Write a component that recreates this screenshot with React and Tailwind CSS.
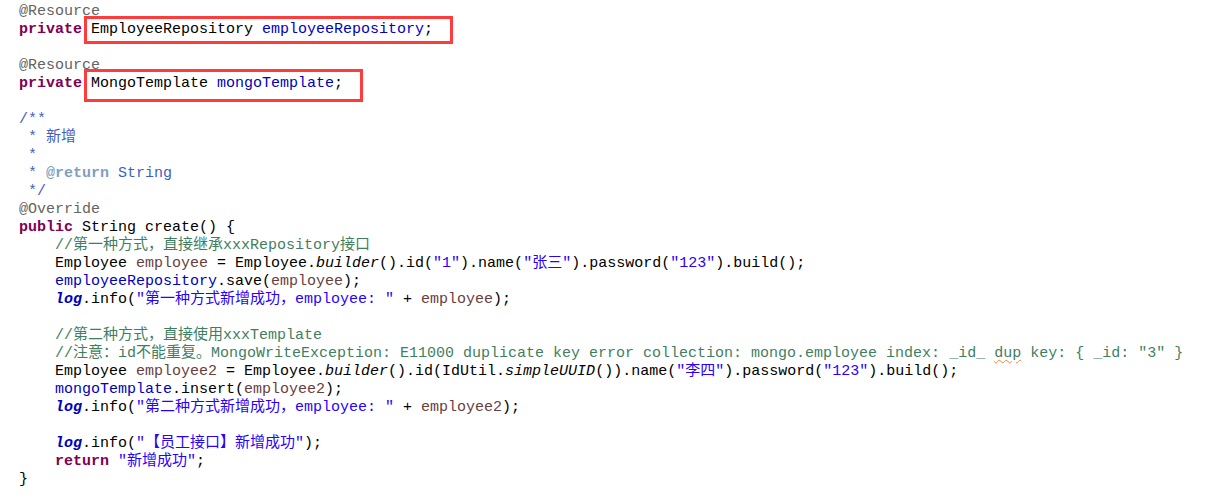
import React from "react";

const A = ({ children }) => <span className="text-[#646464]">{children}</span>;
const K = ({ children }) => <span className="font-bold text-[#7f0055]">{children}</span>;
const F = ({ children }) => <span className="text-[#0000c0]">{children}</span>;
const L = ({ children }) => <span className="text-[#6a3e3e]">{children}</span>;
const S = ({ children }) => <span className="text-[#2a00ff]">{children}</span>;
const C = ({ children }) => <span className="text-[#3f7f5f]">{children}</span>;
const J = ({ children }) => <span className="text-[#3f5fbf]">{children}</span>;
const JT = ({ children }) => <span className="font-bold text-[#7f9fbf]">{children}</span>;
const I = ({ children }) => <span className="italic">{children}</span>;
const LOG = () => <span className="italic font-bold text-[#0000c0]">log</span>;

const Line = ({ children, indent }) => (
  <div className={`h-[18px] leading-[18px] whitespace-pre ${indent ? "pl-[36px]" : ""}`}>
    {children}
  </div>
);

const Box = ({ children, top, bottom }) => (
  <span className="relative inline-block h-[18px] leading-[18px] align-top">
    {children}
    <span
      className={`absolute left-[-7px] right-[-20px] border-[3px] border-[#ff3b3b] ${top} ${bottom}`}
    />
  </span>
);

export default function App() {
  return (
    <div
      className="w-[1224px] h-[497px] bg-white text-black text-[15px] pt-[3px] pl-[19px] overflow-hidden"
      style={{ fontFamily: '"Liberation Mono", "Noto Sans CJK SC", monospace' }}
    >
      <Line><A>@Resource</A></Line>
      <Line>
        <K>private</K>{" "}
        <Box top="top-[-5px]" bottom="bottom-[-5px]">
          EmployeeRepository <F>employeeRepository</F>;
        </Box>
      </Line>
      <Line />
      <Line><A>@Resource</A></Line>
      <Line>
        <K>private</K>{" "}
        <Box top="top-[-6px]" bottom="bottom-[-9px]">
          MongoTemplate <F>mongoTemplate</F>;
        </Box>
      </Line>
      <Line />
      <Line><J>/**</J></Line>
      <Line><J> * 新增</J></Line>
      <Line><J> *</J></Line>
      <Line><J> * </J><JT>@return</JT><J> String</J></Line>
      <Line><J> */</J></Line>
      <Line><A>@Override</A></Line>
      <Line><K>public</K> String create() {"{"}</Line>
      <Line indent><C>//第一种方式，直接继承xxxRepository接口</C></Line>
      <Line indent>
        Employee <L>employee</L> = Employee.<I>builder</I>().id(<S>"1"</S>).name(<S>"张三"</S>).password(<S>"123"</S>).build();
      </Line>
      <Line indent>
        <F>employeeRepository</F>.save(<L>employee</L>);
      </Line>
      <Line indent>
        <LOG />.info(<S>"第一种方式新增成功，employee: "</S> + <L>employee</L>);
      </Line>
      <Line />
      <Line indent><C>//第二种方式，直接使用xxxTemplate</C></Line>
      <Line indent>
        <C>//注意：id不能重复。MongoWriteException: E11000 duplicate key error collection: mongo.employee index: _id_ </C>
        <span className="text-[#3f7f5f] underline decoration-wavy decoration-[#ff8040] decoration-1 underline-offset-2">dup</span>
        <C> key: {"{"} _id: "3" {"}"}</C>
      </Line>
      <Line indent>
        Employee <L>employee2</L> = Employee.<I>builder</I>().id(IdUtil.<I>simpleUUID</I>()).name(<S>"李四"</S>).password(<S>"123"</S>).build();
      </Line>
      <Line indent>
        <F>mongoTemplate</F>.insert(<L>employee2</L>);
      </Line>
      <Line indent>
        <LOG />.info(<S>"第二种方式新增成功，employee: "</S> + <L>employee2</L>);
      </Line>
      <Line />
      <Line indent>
        <LOG />.info(<S>"【员工接口】新增成功"</S>);
      </Line>
      <Line indent>
        <K>return</K> <S>"新增成功"</S>;
      </Line>
      <Line>{"}"}</Line>
    </div>
  );
}
